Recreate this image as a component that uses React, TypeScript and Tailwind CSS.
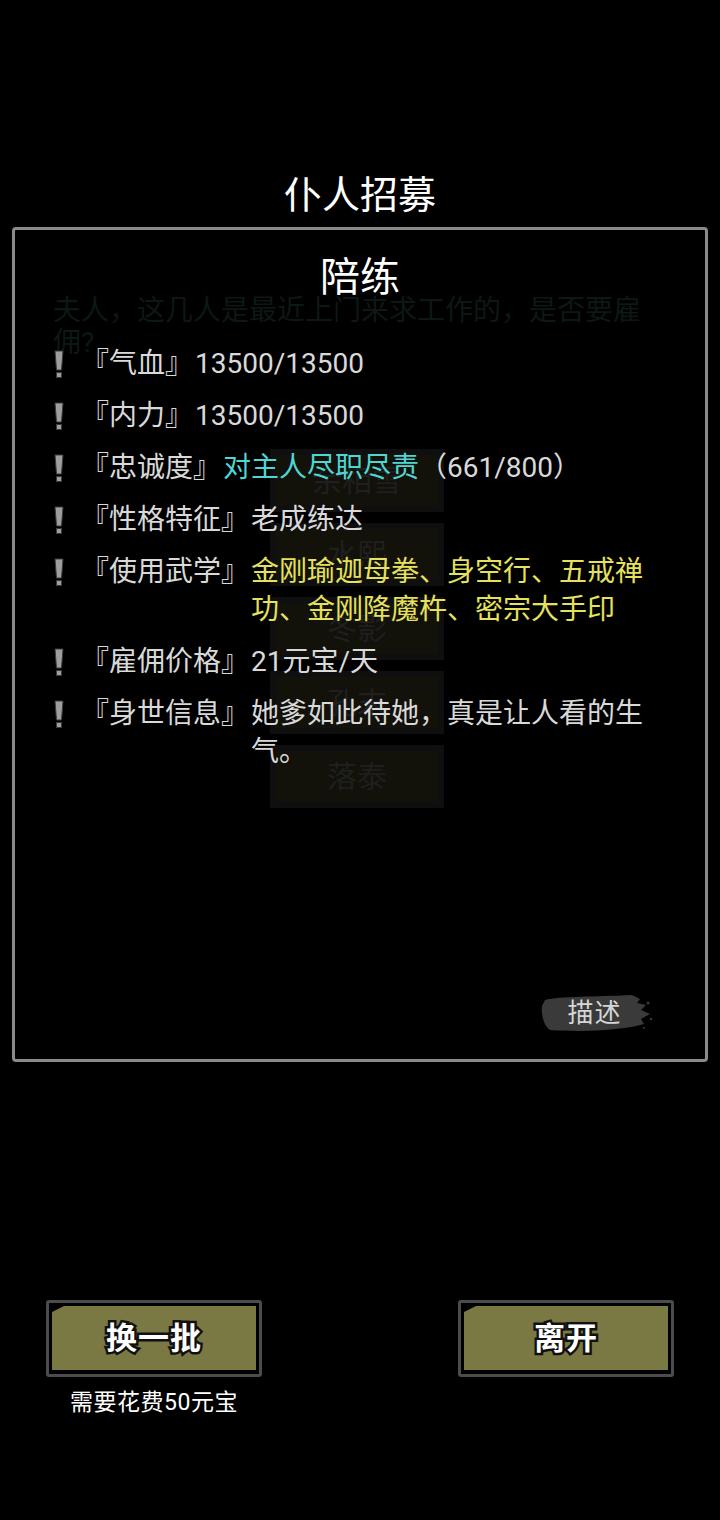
import React from "react";

const Bang = () => (
  <svg width="10" height="28" viewBox="0 0 10 28" className="block">
    <path d="M1 1 L9 1 L7.5 20 L2.5 20 Z" fill="#9e9e9e" stroke="#3a3a3a" strokeWidth="1" />
    <rect x="2.5" y="22.5" width="5" height="5" fill="#9e9e9e" stroke="#3a3a3a" strokeWidth="1" />
  </svg>
);

type Row = { label: string; value: React.ReactNode };

const rows: Row[] = [
  { label: "『气血』", value: <span>13500/13500</span> },
  { label: "『内力』", value: <span>13500/13500</span> },
  {
    label: "『忠诚度』",
    value: (
      <span>
        <span className="text-[#4fd6d4]">对主人尽职尽责</span>
        <span>（661/800）</span>
      </span>
    ),
  },
  { label: "『性格特征』", value: <span>老成练达</span> },
  {
    label: "『使用武学』",
    value: <span className="text-[#e6e15c]">金刚瑜迦母拳、身空行、五戒禅功、金刚降魔杵、密宗大手印</span>,
  },
  { label: "『雇佣价格』", value: <span>21元宝/天</span> },
  { label: "『身世信息』", value: <span>她爹如此待她，真是让人看的生气。</span> },
];

const bgNames = ["余相雪", "水熙", "冬影", "孔末", "落泰"];

const GameButton = ({ text }: { text: string }) => (
  <div className="w-[216px] h-[77px] rounded-[3px] border-[3px] border-[#4c4c4c] bg-black pt-[3px] px-[3px] pb-[4px]">
    <div className="relative h-full w-full bg-[#7b7943] flex items-center justify-center">
      <div className="absolute left-0 top-0 w-0 h-0 border-t-[6px] border-t-black border-r-[12px] border-r-transparent" />
      <span className="text-[31px] font-bold text-white leading-none [-webkit-text-stroke:5px_#111] [paint-order:stroke_fill] tracking-[1px]">
        {text}
      </span>
    </div>
  </div>
);

export default function App() {
  return (
    <div className="relative w-[720px] h-[1520px] bg-black overflow-hidden font-['Roboto','Noto_Sans_CJK_SC',sans-serif]">
      {/* underlying page, seen faintly through the overlay */}
      <div className="absolute inset-0 flex flex-col">
        <div className="pt-[295px] pl-[53px] w-[650px] text-[28px] leading-[32px] text-[#0c1815]">
          夫人，这几人是最近上门来求工作的，是否要雇佣?
        </div>
        <div className="mt-[90px] ml-[270px] flex flex-col gap-[11px]">
          {bgNames.map((n) => (
            <div
              key={n}
              className="w-[174px] h-[63px] border-[6px] border-[#0f0f0f] bg-[#12110a] flex items-center justify-center text-[30px] text-[#1f1f1f] leading-none"
            >
              {n}
            </div>
          ))}
        </div>
      </div>

      {/* overlay */}
      <div className="relative flex flex-col">
        <div className="pt-[171px] h-[227px] text-center text-[38px] leading-[48px] text-white">仆人招募</div>

        <div className="mx-[12px] h-[835px] rounded-[4px] border-[3px] border-[#8a8a8a] flex flex-col">
          <div className="pt-[22px] text-center text-[40px] leading-[52px] text-white">陪练</div>

          <div className="mt-[41px] pl-[30px] pr-[45px] flex flex-col gap-[14px] text-[28px] leading-[38px] text-[#d9d9d9]">
            {rows.map((r) => (
              <div key={r.label} className="flex items-start">
                <div className="w-[28px] h-[38px] flex items-center justify-center shrink-0">
                  <Bang />
                </div>
                <div className="ml-[8px] shrink-0 whitespace-nowrap">{r.label}</div>
                <div className="ml-[2px] flex-1 min-w-0">{r.value}</div>
              </div>
            ))}
          </div>

          <div className="flex-1" />

          <div className="flex justify-end pr-[50px] pb-[24px]">
            <div className="relative w-[115px] h-[44px] flex items-center justify-center">
              <svg width="115" height="44" viewBox="0 0 115 44" className="absolute inset-0">
                <path
                  d="M5 9 C20 5 55 6 92 4 L100 8 L97 12 L106 14 L101 19 L110 23 L101 28 L104 33 C80 40 40 41 10 39 C3 34 1 22 2 15 Z"
                  fill="#3a3a3a"
                />
                <circle cx="108" cy="12" r="1.5" fill="#3a3a3a" />
                <circle cx="111" cy="28" r="1.2" fill="#3a3a3a" />
                <circle cx="104" cy="37" r="1" fill="#3a3a3a" />
              </svg>
              <span className="relative text-[26px] leading-none text-[#d6d6d6] -ml-[6px] tracking-[1px]">描述</span>
            </div>
          </div>
        </div>

        <div className="mt-[238px] px-[46px] flex justify-between items-start">
          <div className="flex flex-col items-center">
            <GameButton text="换一批" />
            <div className="mt-[12px] text-[23px] leading-[28px] text-white tracking-[0.5px]">需要花费50元宝</div>
          </div>
          <GameButton text="离开" />
        </div>
      </div>
    </div>
  );
}
